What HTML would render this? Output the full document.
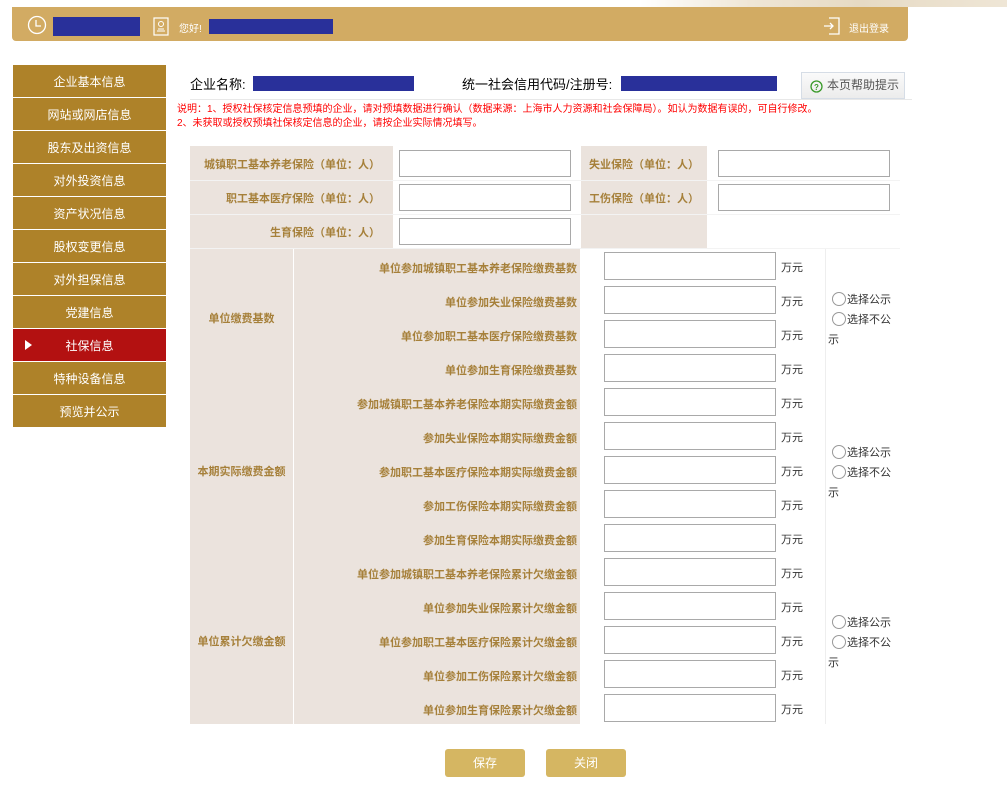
<!DOCTYPE html><html><head><meta charset="utf-8"><style>
*{margin:0;padding:0;box-sizing:border-box}
body{width:1007px;height:796px;background:#fff;position:relative;overflow:hidden;font-family:"Liberation Sans","Noto Sans CJK SC",sans-serif}
.a{position:absolute}
.hdr{left:12px;top:7px;width:896px;height:34px;background:#d2ab63;border-radius:0 0 4px 4px}
.tex{left:640px;top:0;width:367px;height:7px;background:linear-gradient(90deg,#fff,#efe6d6 30%,#e6dac4 60%,#efe6d6)}
.blue{background:#29309a}
.ht{color:#fff;font-size:10px}
.nav{left:13px;width:153px;height:32px;background:#ae8229;color:#fff;font-size:12px;text-align:center;line-height:34px}
.nav.on{background:#b31111}
.lb{background:#ebe3dd}
.lt{color:#a6803a;font-size:11px;font-weight:bold;text-align:right;white-space:nowrap}
.in{border:1px solid #a9a9a9;background:#fff}
.wy{font-size:11px;color:#333}
.rd{font-size:11px;color:#333;white-space:nowrap}
.rd i{display:inline-block;width:14px;height:14px;border:1px solid #999;border-radius:50%;vertical-align:-3px;margin-right:1px}
.btn{top:749px;width:80px;height:28px;background:#d5b662;color:#fff;font-size:12px;text-align:center;line-height:28px;border-radius:3px}
</style></head><body>
<div class="a tex"></div>
<div class="a hdr"></div>
<svg class="a" style="left:27px;top:15px" width="20" height="20"><circle cx="10" cy="10" r="8.5" fill="none" stroke="#fff" stroke-width="1.3"/><path d="M9 5v6h5" fill="none" stroke="#fff" stroke-width="1.3"/></svg>
<div class="a blue" style="left:53px;top:17px;width:87px;height:19px"></div>
<svg class="a" style="left:153px;top:17px" width="16" height="19"><rect x="1" y="1" width="14" height="17" fill="none" stroke="#fff" stroke-width="1.2"/><circle cx="8" cy="7" r="2.5" fill="none" stroke="#fff"/><path d="M4 14h8M5 12h6" stroke="#fff"/></svg>
<div class="a ht" style="left:179px;top:20px">您好!</div>
<div class="a blue" style="left:209px;top:19px;width:124px;height:15px"></div>
<svg class="a" style="left:823px;top:17px" width="17" height="18"><path d="M6 1h10v16H6M1 9h9M7 6l3 3-3 3" fill="none" stroke="#fff" stroke-width="1.3"/></svg>
<div class="a ht" style="left:849px;top:20px">退出登录</div>

<div class="a nav" style="top:65px">企业基本信息</div>
<div class="a nav" style="top:98px">网站或网店信息</div>
<div class="a nav" style="top:131px">股东及出资信息</div>
<div class="a nav" style="top:164px">对外投资信息</div>
<div class="a nav" style="top:197px">资产状况信息</div>
<div class="a nav" style="top:230px">股权变更信息</div>
<div class="a nav" style="top:263px">对外担保信息</div>
<div class="a nav" style="top:296px">党建信息</div>
<div class="a nav on" style="top:329px">社保信息</div>
<div class="a" style="left:25px;top:340px;width:0;height:0;border-left:7px solid #fff;border-top:5px solid transparent;border-bottom:5px solid transparent"></div>
<div class="a nav" style="top:362px">特种设备信息</div>
<div class="a nav" style="top:395px">预览并公示</div>

<div class="a" style="left:190px;top:74px;font-size:13px;color:#000">企业名称:</div>
<div class="a blue" style="left:253px;top:76px;width:161px;height:15px"></div>
<div class="a" style="left:462px;top:74px;font-size:13px;color:#000">统一社会信用代码/注册号:</div>
<div class="a blue" style="left:621px;top:76px;width:156px;height:15px"></div>
<div class="a" style="left:801px;top:72px;width:104px;height:27px;border:1px solid #d6dde6;background:linear-gradient(#fafafa,#ececec);font-size:12px;color:#555;line-height:25px;padding-left:25px">本页帮助提示</div>
<svg class="a" style="left:810px;top:80px" width="13" height="13"><circle cx="6.5" cy="6.5" r="5.5" fill="none" stroke="#3a9a2a" stroke-width="1.3"/><text x="6.5" y="10" font-size="8" text-anchor="middle" fill="#3a9a2a" font-weight="bold" font-family="Liberation Sans">?</text></svg>
<div class="a" style="left:190px;top:99px;width:722px;height:1px;background:#e8e8e8"></div>
<div class="a" style="left:177px;top:103px;font-size:10px;color:#f00;line-height:14px;white-space:nowrap">说明：1、授权社保核定信息预填的企业，请对预填数据进行确认（数据来源：上海市人力资源和社会保障局）。如认为数据有误的，可自行修改。<br>2、未获取或授权预填社保核定信息的企业，请按企业实际情况填写。</div>

<div class="a lb" style="left:190px;top:146px;width:203px;height:102px"></div>
<div class="a lb" style="left:581px;top:146px;width:126px;height:102px"></div>
<div class="a" style="left:190px;top:180px;width:710px;height:1px;background:#f3f3f3"></div>
<div class="a" style="left:190px;top:214px;width:710px;height:1px;background:#f3f3f3"></div>
<div class="a" style="left:190px;top:248px;width:710px;height:1px;background:#f3f3f3"></div>
<div class="a lt" style="left:190px;top:156px;width:190px">城镇职工基本养老保险（单位：人）</div>
<div class="a lt" style="left:190px;top:190px;width:190px">职工基本医疗保险（单位：人）</div>
<div class="a lt" style="left:190px;top:224px;width:190px">生育保险（单位：人）</div>
<div class="a lt" style="left:581px;top:156px;width:118px">失业保险（单位：人）</div>
<div class="a lt" style="left:581px;top:190px;width:118px">工伤保险（单位：人）</div>
<div class="a in" style="left:399px;top:150px;width:172px;height:27px"></div>
<div class="a in" style="left:399px;top:184px;width:172px;height:27px"></div>
<div class="a in" style="left:399px;top:218px;width:172px;height:27px"></div>
<div class="a in" style="left:718px;top:150px;width:172px;height:27px"></div>
<div class="a in" style="left:718px;top:184px;width:172px;height:27px"></div>

<div class="a lb" style="left:190px;top:249px;width:103px;height:475px"></div>
<div class="a lb" style="left:294px;top:249px;width:286px;height:475px"></div>
<div class="a" style="left:825px;top:249px;width:1px;height:475px;background:#eee"></div>
<div class="a lt" style="left:190px;top:310px;width:103px;text-align:center">单位缴费基数</div>
<div class="a lt" style="left:190px;top:463px;width:103px;text-align:center">本期实际缴费金额</div>
<div class="a lt" style="left:190px;top:633px;width:103px;text-align:center">单位累计欠缴金额</div>

<div class="a lt" style="left:294px;top:260px;width:283px">单位参加城镇职工基本养老保险缴费基数</div>
<div class="a lt" style="left:294px;top:294px;width:283px">单位参加失业保险缴费基数</div>
<div class="a lt" style="left:294px;top:328px;width:283px">单位参加职工基本医疗保险缴费基数</div>
<div class="a lt" style="left:294px;top:362px;width:283px">单位参加生育保险缴费基数</div>
<div class="a lt" style="left:294px;top:396px;width:283px">参加城镇职工基本养老保险本期实际缴费金额</div>
<div class="a lt" style="left:294px;top:430px;width:283px">参加失业保险本期实际缴费金额</div>
<div class="a lt" style="left:294px;top:464px;width:283px">参加职工基本医疗保险本期实际缴费金额</div>
<div class="a lt" style="left:294px;top:498px;width:283px">参加工伤保险本期实际缴费金额</div>
<div class="a lt" style="left:294px;top:532px;width:283px">参加生育保险本期实际缴费金额</div>
<div class="a lt" style="left:294px;top:566px;width:283px">单位参加城镇职工基本养老保险累计欠缴金额</div>
<div class="a lt" style="left:294px;top:600px;width:283px">单位参加失业保险累计欠缴金额</div>
<div class="a lt" style="left:294px;top:634px;width:283px">单位参加职工基本医疗保险累计欠缴金额</div>
<div class="a lt" style="left:294px;top:668px;width:283px">单位参加工伤保险累计欠缴金额</div>
<div class="a lt" style="left:294px;top:702px;width:283px">单位参加生育保险累计欠缴金额</div>

<div class="a in" style="left:604px;top:252px;width:172px;height:28px"></div><div class="a wy" style="left:781px;top:259px">万元</div>
<div class="a in" style="left:604px;top:286px;width:172px;height:28px"></div><div class="a wy" style="left:781px;top:293px">万元</div>
<div class="a in" style="left:604px;top:320px;width:172px;height:28px"></div><div class="a wy" style="left:781px;top:327px">万元</div>
<div class="a in" style="left:604px;top:354px;width:172px;height:28px"></div><div class="a wy" style="left:781px;top:361px">万元</div>
<div class="a in" style="left:604px;top:388px;width:172px;height:28px"></div><div class="a wy" style="left:781px;top:395px">万元</div>
<div class="a in" style="left:604px;top:422px;width:172px;height:28px"></div><div class="a wy" style="left:781px;top:429px">万元</div>
<div class="a in" style="left:604px;top:456px;width:172px;height:28px"></div><div class="a wy" style="left:781px;top:463px">万元</div>
<div class="a in" style="left:604px;top:490px;width:172px;height:28px"></div><div class="a wy" style="left:781px;top:497px">万元</div>
<div class="a in" style="left:604px;top:524px;width:172px;height:28px"></div><div class="a wy" style="left:781px;top:531px">万元</div>
<div class="a in" style="left:604px;top:558px;width:172px;height:28px"></div><div class="a wy" style="left:781px;top:565px">万元</div>
<div class="a in" style="left:604px;top:592px;width:172px;height:28px"></div><div class="a wy" style="left:781px;top:599px">万元</div>
<div class="a in" style="left:604px;top:626px;width:172px;height:28px"></div><div class="a wy" style="left:781px;top:633px">万元</div>
<div class="a in" style="left:604px;top:660px;width:172px;height:28px"></div><div class="a wy" style="left:781px;top:667px">万元</div>
<div class="a in" style="left:604px;top:694px;width:172px;height:28px"></div><div class="a wy" style="left:781px;top:701px">万元</div>

<div class="a rd" style="left:832px;top:291px"><i></i>选择公示</div>
<div class="a rd" style="left:832px;top:311px"><i></i>选择不公</div>
<div class="a rd" style="left:828px;top:331px">示</div>
<div class="a rd" style="left:832px;top:444px"><i></i>选择公示</div>
<div class="a rd" style="left:832px;top:464px"><i></i>选择不公</div>
<div class="a rd" style="left:828px;top:484px">示</div>
<div class="a rd" style="left:832px;top:614px"><i></i>选择公示</div>
<div class="a rd" style="left:832px;top:634px"><i></i>选择不公</div>
<div class="a rd" style="left:828px;top:654px">示</div>

<div class="a btn" style="left:445px">保存</div>
<div class="a btn" style="left:546px">关闭</div>
</body></html>
